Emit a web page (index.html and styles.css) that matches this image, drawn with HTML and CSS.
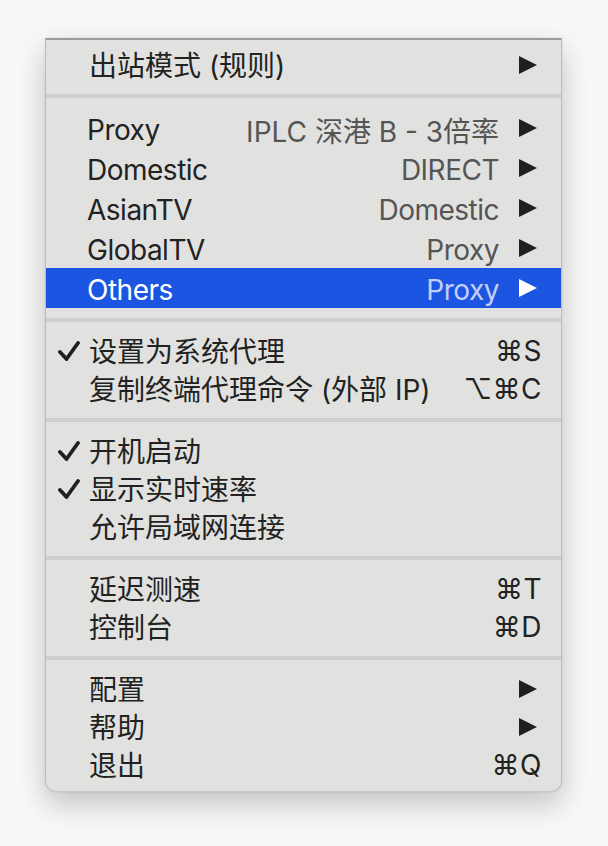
FILE: index.html
```html
<!DOCTYPE html>
<html lang="zh">
<head>
<meta charset="utf-8">
<title>Menu</title>
<link rel="stylesheet" href="styles.css">
</head>
<body>
<div class="menu">
  <div class="item"><span class="check"></span><span class="label">出站模式 (规则)</span><span class="arrow"><svg viewBox="0 0 18 18"><path d="M0 0 L18 9 L0 18 Z"/></svg></span></div>
  <div class="sep"></div>
  <div class="item tall"><span class="check"></span><span class="label">Proxy</span><span class="value mix">IPLC 深港 B - 3倍率</span><span class="arrow"><svg viewBox="0 0 18 18"><path d="M0 0 L18 9 L0 18 Z"/></svg></span></div>
  <div class="item tall"><span class="check"></span><span class="label">Domestic</span><span class="value">DIRECT</span><span class="arrow"><svg viewBox="0 0 18 18"><path d="M0 0 L18 9 L0 18 Z"/></svg></span></div>
  <div class="item tall"><span class="check"></span><span class="label">AsianTV</span><span class="value">Domestic</span><span class="arrow"><svg viewBox="0 0 18 18"><path d="M0 0 L18 9 L0 18 Z"/></svg></span></div>
  <div class="item tall"><span class="check"></span><span class="label">GlobalTV</span><span class="value">Proxy</span><span class="arrow"><svg viewBox="0 0 18 18"><path d="M0 0 L18 9 L0 18 Z"/></svg></span></div>
  <div class="item tall active"><span class="check"></span><span class="label">Others</span><span class="value">Proxy</span><span class="arrow"><svg viewBox="0 0 18 18"><path d="M0 0 L18 9 L0 18 Z"/></svg></span></div>
  <div class="sep"></div>
  <div class="item"><span class="check"><svg viewBox="0 0 22 20"><path d="M2 11 L8.5 18 L20 2"/></svg></span><span class="label">设置为系统代理</span><span class="key">⌘S</span></div>
  <div class="item"><span class="check"></span><span class="label">复制终端代理命令 (外部 IP)</span><span class="key">⌥⌘C</span></div>
  <div class="sep"></div>
  <div class="item"><span class="check"><svg viewBox="0 0 22 20"><path d="M2 11 L8.5 18 L20 2"/></svg></span><span class="label">开机启动</span></div>
  <div class="item"><span class="check"><svg viewBox="0 0 22 20"><path d="M2 11 L8.5 18 L20 2"/></svg></span><span class="label">显示实时速率</span></div>
  <div class="item"><span class="check"></span><span class="label">允许局域网连接</span></div>
  <div class="sep"></div>
  <div class="item"><span class="check"></span><span class="label">延迟测速</span><span class="key">⌘T</span></div>
  <div class="item"><span class="check"></span><span class="label">控制台</span><span class="key">⌘D</span></div>
  <div class="sep"></div>
  <div class="item"><span class="check"></span><span class="label">配置</span><span class="arrow"><svg viewBox="0 0 18 18"><path d="M0 0 L18 9 L0 18 Z"/></svg></span></div>
  <div class="item"><span class="check"></span><span class="label">帮助</span><span class="arrow"><svg viewBox="0 0 18 18"><path d="M0 0 L18 9 L0 18 Z"/></svg></span></div>
  <div class="item"><span class="check"></span><span class="label">退出</span><span class="key">⌘Q</span></div>
</div>
</body>
</html>
```

FILE: styles.css
```css
html, body {
  margin: 0;
  padding: 0;
}
body {
  background: #f8f8f8;
  width: 608px;
  height: 846px;
  overflow: hidden;
  font-family: Inter, "Noto Sans CJK SC", sans-serif;
  font-size: 28px;
  color: #222222;
}
.menu {
  box-sizing: border-box;
  width: 517px;
  margin: 38px 0 0 45px;
  background: #e1e2e0;
  border-top: 2px solid #9c9c9c;
  border-left: 1px solid #bdbdbd;
  border-right: 1px solid #bdbdbd;
  border-bottom: 1px solid #c6c6c6;
  border-radius: 0 0 11px 11px;
  box-shadow: 0 12px 30px rgba(0, 0, 0, 0.22), 0 0 3px rgba(0, 0, 0, 0.08);
  padding: 6px 0 7px;
}
.item {
  box-sizing: border-box;
  display: flex;
  align-items: center;
  height: 38px;
  padding: 0 20px 3px 12px;
  white-space: nowrap;
}
.item .check {
  margin-top: 2px;
}
.item.tall {
  height: 40px;
  padding-top: 3px;
  padding-bottom: 0;
}
.tall .label {
  margin-left: -2px;
  margin-right: 2px;
}
.tall .label,
.tall .value {
  letter-spacing: -0.5px;
}
.tall .value.mix {
  letter-spacing: 0;
}
.check {
  width: 31px;
  flex: none;
  display: flex;
  align-items: center;
}
.check svg {
  width: 22px;
  height: 20px;
  fill: none;
  stroke: #1f1f1f;
  stroke-width: 3.8;
  stroke-linecap: round;
  stroke-linejoin: round;
}
.label {
  flex: 1;
}
.value {
  color: #555555;
  margin-right: 20px;
}
.arrow {
  width: 18px;
  height: 18px;
  margin-right: 4px;
  display: flex;
  margin-top: 2px;
}
.tall .arrow {
  margin-top: -3px;
}
.arrow svg {
  width: 18px;
  height: 18px;
  fill: #1f1f1f;
}
.key {
  letter-spacing: 0.5px;
  margin-right: -1px;
  margin-top: 2px;
}
.active {
  background: #1c55e2;
  color: #ffffff;
}
.active .value {
  color: #c3cff7;
}
.active .arrow svg {
  fill: #ffffff;
}
.sep {
  height: 24px;
  display: flex;
  align-items: center;
}
.sep::before {
  content: "";
  display: block;
  width: 100%;
  height: 4px;
  background: #cfd0ce;
}
```
